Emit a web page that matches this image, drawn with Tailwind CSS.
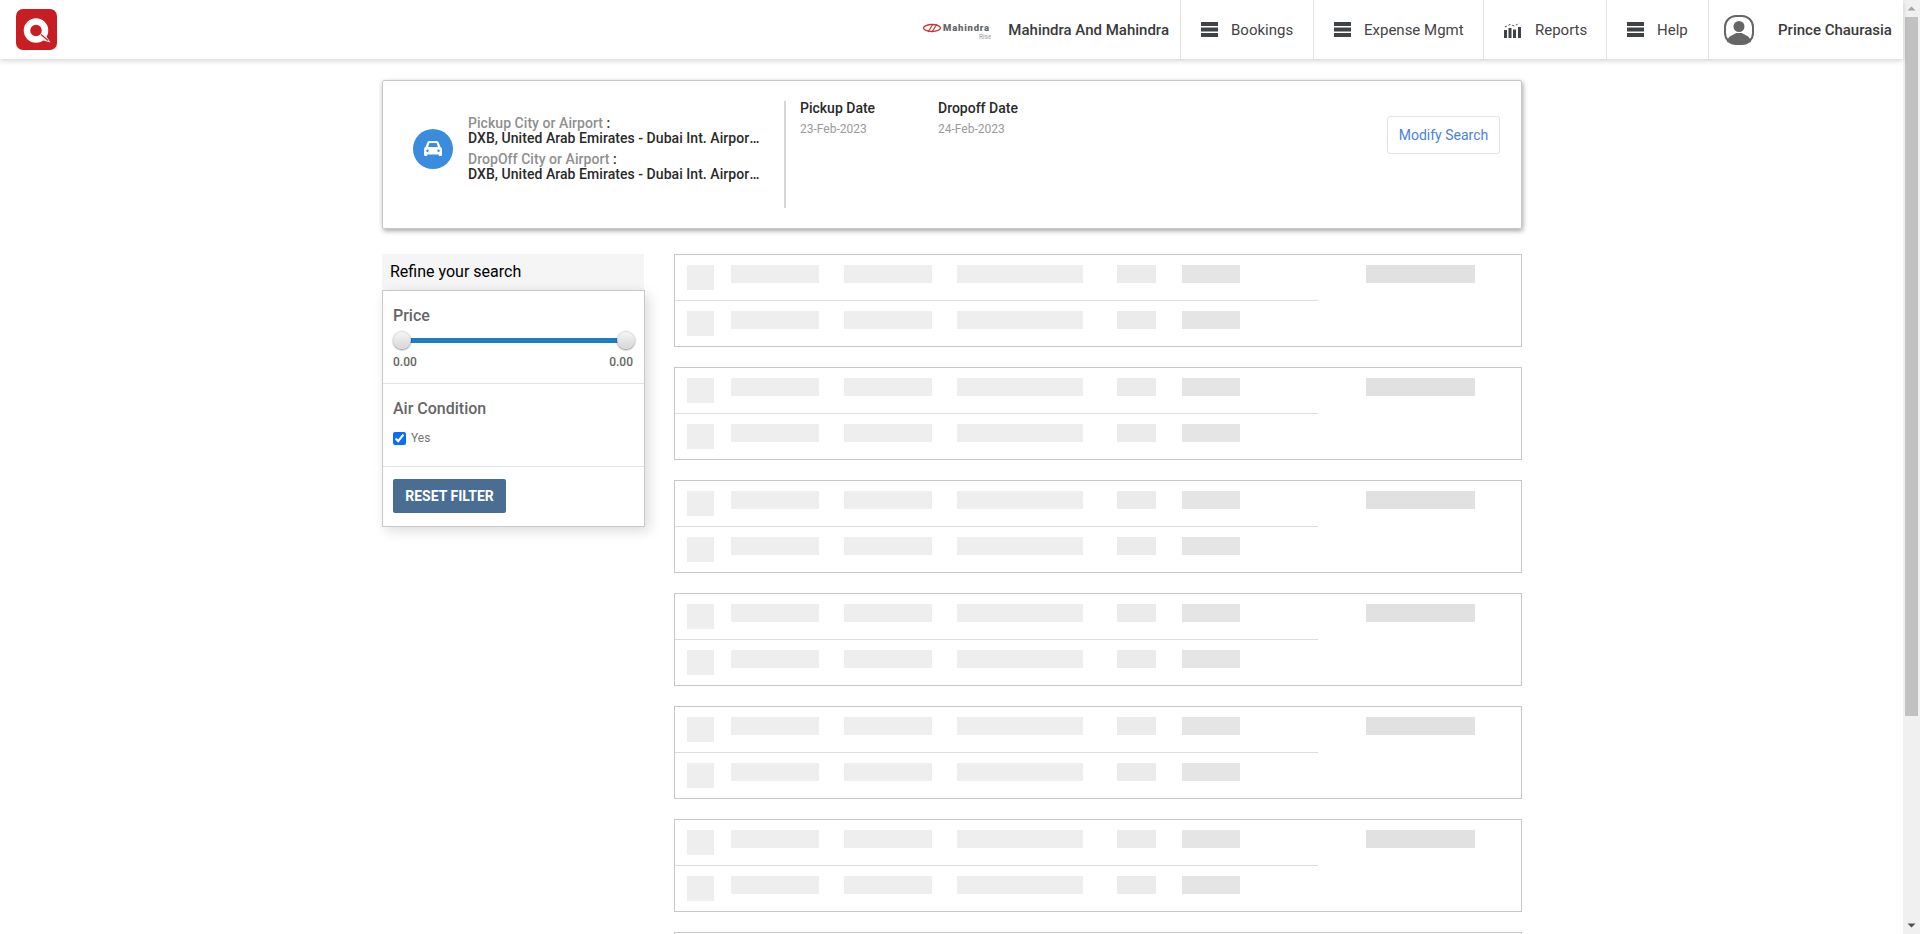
<!DOCTYPE html>
<html>
<head>
    <title>Car Search</title>
    <meta charset="UTF-8">
    <meta name="viewport" content="width=device-width, initial-scale=1">
    <script src="https://cdn.jsdelivr.net/npm/@tailwindcss/browser@4"></script>
</head>
<body class="bg-white font-['Roboto',sans-serif] text-[#333]">
<div class="flex h-[934px] overflow-hidden">
    <div class="flex-1 min-w-0">
        <!-- top nav -->
        <header class="h-[59px] flex items-center bg-white shadow-[0_2px_5px_rgba(0,0,0,0.16)] relative">
            <div class="w-[41px] h-[41px] ml-[16px] mt-[-1px] rounded-[7px] bg-[#c81e23]">
                <svg width="41" height="41" viewBox="0 0 41 41">
                    <circle cx="20" cy="21.500" r="9" fill="none" stroke="#fff" stroke-width="6.500"/>
                    <path d="M22 30 L28 24 L34.500 33.500 Z" fill="#fff"/>
                    <path d="M25 25.500 L32 31.500" stroke="#c81e23" stroke-width="1.200"/>
                </svg>
            </div>
            <div class="ml-auto flex h-full items-center text-[15px]">
                <svg width="68" height="20" viewBox="0 0 68 20" class="mr-[17px]">
                    <ellipse cx="9" cy="8" rx="8.500" ry="3.500" fill="none" stroke="#c8363a" stroke-width="1.300"/>
                    <path d="M5 12 L10 4 M9 12 L14 4" stroke="#c8363a" stroke-width="1.200"/>
                    <text x="20" y="11" font-size="9.500" font-weight="900" letter-spacing="0.800" fill="#666">Mahindra</text>
                    <text x="56" y="19" font-size="6.500" fill="#999">Rise</text>
                </svg>
                <span class="font-medium text-[#3a3a3a] pr-[11px] pt-[1px]">Mahindra And Mahindra</span>
                <a class="h-full flex items-center border-l border-[#e3e3e3] pl-[20px] w-[133px] text-[#444]">
                    <svg width="17" height="15" viewBox="0 0 17 15" class="mr-[13px]" fill="#3f4345"><rect width="17" height="4"/><rect y="5.500" width="17" height="4"/><rect y="11" width="17" height="4"/></svg>
                    <span class="pt-[1px]">Bookings</span>
                </a>
                <a class="h-full flex items-center border-l border-[#e3e3e3] pl-[20px] w-[170px] text-[#444]">
                    <svg width="17" height="15" viewBox="0 0 17 15" class="mr-[13px]" fill="#3f4345"><rect width="17" height="4"/><rect y="5.500" width="17" height="4"/><rect y="11" width="17" height="4"/></svg>
                    <span class="pt-[1px]">Expense Mgmt</span>
                </a>
                <a class="h-full flex items-center border-l border-[#e3e3e3] pl-[20px] w-[123px] text-[#444]">
                    <svg width="17" height="16" viewBox="0 0 17 16" class="mr-[14px]" fill="#3f4345">
                        <rect y="8" width="3" height="8"/><rect x="4.500" y="6" width="3" height="10"/><rect x="9" y="7.500" width="3" height="8.500"/><rect x="14" y="5" width="3" height="11"/>
                        <path d="M1 5 L6 2.500 L10.500 4 L15.500 1" fill="none" stroke="#3f4345" stroke-width="1" stroke-dasharray="2 2"/>
                    </svg>
                    <span class="pt-[1px]">Reports</span>
                </a>
                <a class="h-full flex items-center border-l border-[#e3e3e3] pl-[20px] w-[102px] text-[#444]">
                    <svg width="17" height="15" viewBox="0 0 17 15" class="mr-[13px]" fill="#3f4345"><rect width="17" height="4"/><rect y="5.500" width="17" height="4"/><rect y="11" width="17" height="4"/></svg>
                    <span class="pt-[1px]">Help</span>
                </a>
                <div class="h-full flex items-center border-l border-[#e3e3e3] pl-[15px] w-[195px]">
                    <svg width="30" height="30" viewBox="0 0 30 30" class="mr-[24px]">
                        <rect x="1" y="1" width="28" height="28" rx="11" fill="#fff" stroke="#666" stroke-width="2"/>
                        <circle cx="15" cy="11.500" r="5.500" fill="#666"/>
                        <path d="M3 27 C4 20 10 20 12 18 L18 18 C20 20 26 20 27 27 Q15 31 3 27 Z" fill="#666"/>
                    </svg>
                    <span class="font-medium text-[#3a3a3a] pt-[1px]">Prince Chaurasia</span>
                </div>
            </div>
        </header>

        <!-- search summary -->
        <section class="ml-[382px] mt-[21px] w-[1140px] h-[149px] flex items-start border border-[#c8c8c8] rounded-[2px] shadow-[1px_2px_5px_rgba(0,0,0,0.35)] relative">
            <div class="flex items-center mt-[35px] pl-[30px] w-[401px] shrink-0">
                <div class="w-10 h-10 rounded-full bg-[#3a8cde] flex items-center justify-center shrink-0">
                    <svg width="20" height="16" viewBox="0 0 20 16" fill="#fff">
                        <path d="M4.500 1 Q5 0 6.500 0 L13.500 0 Q15 0 15.500 1 L17.500 6 Q19 6.500 19 8 L19 14 Q19 15 18 15 L16 15 L15.500 13.500 L4.500 13.500 L4 15 L2 15 Q1 15 1 14 L1 8 Q1 6.500 2.500 6 Z M5 6 L15 6 L13.500 2 L6.500 2 Z"/>
                        <circle cx="4.500" cy="9.800" r="1.200" fill="#3a8cde"/><circle cx="15.500" cy="9.800" r="1.200" fill="#3a8cde"/>
                    </svg>
                </div>
                <div class="ml-[15px] w-[293px] text-[14px] leading-[15px] font-medium tracking-[0.05px]">
                    <p class="text-[#8f8f8f]">Pickup City or Airport <span class="text-[#333]">:</span></p>
                    <p class="truncate text-[#2a2a2a]">DXB, United Arab Emirates - Dubai Int. Airport (DXB)</p>
                    <p class="text-[#8f8f8f] mt-[6px]">DropOff City or Airport <span class="text-[#333]">:</span></p>
                    <p class="truncate text-[#2a2a2a]">DXB, United Arab Emirates - Dubai Int. Airport (DXB)</p>
                </div>
            </div>
            <div class="w-[2px] h-[107px] bg-[#d6d6d6] mt-[20px] shrink-0"></div>
            <div class="ml-[14px] mt-[17px] w-[138px]">
                <p class="text-[14px] leading-[20px] font-medium text-[#2a2a2a]">Pickup Date</p>
                <p class="text-[12px] leading-[20px] mt-[1px] text-[#9a9a9a]">23-Feb-2023</p>
            </div>
            <div class="mt-[17px]">
                <p class="text-[14px] leading-[20px] font-medium text-[#2a2a2a]">Dropoff Date</p>
                <p class="text-[12px] leading-[20px] mt-[1px] text-[#9a9a9a]">24-Feb-2023</p>
            </div>
            <button class="ml-auto mr-[21px] mt-[35px] w-[113px] h-[38px] border border-[#dfe3ea] rounded-[3px] text-[14px] text-[#4a82dc]">Modify Search</button>
        </section>

        <div class="ml-[382px] mt-[25px] flex items-start">
            <!-- filters -->
            <aside class="w-[263px]">
                <h3 class="h-[36px] w-[262px] bg-[#f5f5f5] pl-[8px] text-[16px] leading-[36px] text-black">Refine your search</h3>
                <div class="border border-[#c8c8c8] h-[237px] shadow-[4px_4px_12px_rgba(0,0,0,0.14)]">
                    <div class="h-[93px] px-[10px] pt-[15px] border-b border-[#e3e3e3]">
                        <p class="text-[16px] leading-[20px] font-medium text-[#666]">Price</p>
                        <div class="relative h-[20px] mt-[5px]">
                            <div class="absolute left-[8px] right-[8px] top-[7px] h-[5px] bg-[#1e7cc4]"></div>
                            <span class="absolute left-0 top-0 w-[18px] h-[18px] rounded-full border border-[#ddd] bg-[linear-gradient(#f6f6f6,#d8d8d8)] shadow-[0_1px_2px_rgba(0,0,0,0.5)]"></span>
                            <span class="absolute right-[-1px] top-0 w-[18px] h-[18px] rounded-full border border-[#ddd] bg-[linear-gradient(#f6f6f6,#d8d8d8)] shadow-[0_1px_2px_rgba(0,0,0,0.5)]"></span>
                        </div>
                        <div class="flex justify-between text-[12px] leading-[14px] mt-[4px] pr-[1px] font-medium text-[#666]"><span>0.00</span><span>0.00</span></div>
                    </div>
                    <div class="h-[83px] px-[10px] pt-[15px] border-b border-[#e3e3e3]">
                        <p class="text-[16px] leading-[20px] font-medium text-[#666]">Air Condition</p>
                        <label class="flex items-start mt-[11px] text-[12px] leading-[14px] text-[#777]">
                            <input type="checkbox" checked class="w-[13px] h-[13px] mt-[2px] mr-[5px] accent-[#0b6cf5]"><span class="mt-[1px]">Yes</span>
                        </label>
                    </div>
                    <div class="px-[10px] pt-[12px]">
                        <button class="w-[113px] h-[34px] rounded-[2px] bg-[#4a6d94] text-white text-[14px] font-bold">RESET FILTER</button>
                    </div>
                </div>
            </aside>

            <!-- skeleton results -->
            <div class="ml-[29px] w-[848px] flex flex-col gap-[20px]">
                <div class="relative h-[93px] border border-[#c8c8c8] shrink-0">
                    <div class="h-[46px] w-[643px] border-b border-[#dcdce2] flex items-start pt-[10px] pl-[12px]">
                        <i class="block w-[27px] h-[25px] bg-[#eeeeee]"></i><i class="block ml-[17px] w-[88px] h-[18px] bg-[#eeeeee]"></i><i class="block ml-[25px] w-[88px] h-[18px] bg-[#eeeeee]"></i><i class="block ml-[25px] w-[126px] h-[18px] bg-[#eeeeee]"></i><i class="block ml-[34px] w-[39px] h-[18px] bg-[#ebebeb]"></i><i class="block ml-[26px] w-[58px] h-[18px] bg-[#e5e5e5]"></i>
                    </div>
                    <div class="flex items-start pt-[10px] pl-[12px]">
                        <i class="block w-[27px] h-[25px] bg-[#eeeeee]"></i><i class="block ml-[17px] w-[88px] h-[18px] bg-[#eeeeee]"></i><i class="block ml-[25px] w-[88px] h-[18px] bg-[#eeeeee]"></i><i class="block ml-[25px] w-[126px] h-[18px] bg-[#eeeeee]"></i><i class="block ml-[34px] w-[39px] h-[18px] bg-[#ebebeb]"></i><i class="block ml-[26px] w-[58px] h-[18px] bg-[#e5e5e5]"></i>
                    </div>
                    <i class="absolute left-[691px] top-[10px] block w-[109px] h-[18px] bg-[#e1e1e1]"></i>
                </div>
                <div class="relative h-[93px] border border-[#c8c8c8] shrink-0">
                    <div class="h-[46px] w-[643px] border-b border-[#dcdce2] flex items-start pt-[10px] pl-[12px]">
                        <i class="block w-[27px] h-[25px] bg-[#eeeeee]"></i><i class="block ml-[17px] w-[88px] h-[18px] bg-[#eeeeee]"></i><i class="block ml-[25px] w-[88px] h-[18px] bg-[#eeeeee]"></i><i class="block ml-[25px] w-[126px] h-[18px] bg-[#eeeeee]"></i><i class="block ml-[34px] w-[39px] h-[18px] bg-[#ebebeb]"></i><i class="block ml-[26px] w-[58px] h-[18px] bg-[#e5e5e5]"></i>
                    </div>
                    <div class="flex items-start pt-[10px] pl-[12px]">
                        <i class="block w-[27px] h-[25px] bg-[#eeeeee]"></i><i class="block ml-[17px] w-[88px] h-[18px] bg-[#eeeeee]"></i><i class="block ml-[25px] w-[88px] h-[18px] bg-[#eeeeee]"></i><i class="block ml-[25px] w-[126px] h-[18px] bg-[#eeeeee]"></i><i class="block ml-[34px] w-[39px] h-[18px] bg-[#ebebeb]"></i><i class="block ml-[26px] w-[58px] h-[18px] bg-[#e5e5e5]"></i>
                    </div>
                    <i class="absolute left-[691px] top-[10px] block w-[109px] h-[18px] bg-[#e1e1e1]"></i>
                </div>
                <div class="relative h-[93px] border border-[#c8c8c8] shrink-0">
                    <div class="h-[46px] w-[643px] border-b border-[#dcdce2] flex items-start pt-[10px] pl-[12px]">
                        <i class="block w-[27px] h-[25px] bg-[#eeeeee]"></i><i class="block ml-[17px] w-[88px] h-[18px] bg-[#eeeeee]"></i><i class="block ml-[25px] w-[88px] h-[18px] bg-[#eeeeee]"></i><i class="block ml-[25px] w-[126px] h-[18px] bg-[#eeeeee]"></i><i class="block ml-[34px] w-[39px] h-[18px] bg-[#ebebeb]"></i><i class="block ml-[26px] w-[58px] h-[18px] bg-[#e5e5e5]"></i>
                    </div>
                    <div class="flex items-start pt-[10px] pl-[12px]">
                        <i class="block w-[27px] h-[25px] bg-[#eeeeee]"></i><i class="block ml-[17px] w-[88px] h-[18px] bg-[#eeeeee]"></i><i class="block ml-[25px] w-[88px] h-[18px] bg-[#eeeeee]"></i><i class="block ml-[25px] w-[126px] h-[18px] bg-[#eeeeee]"></i><i class="block ml-[34px] w-[39px] h-[18px] bg-[#ebebeb]"></i><i class="block ml-[26px] w-[58px] h-[18px] bg-[#e5e5e5]"></i>
                    </div>
                    <i class="absolute left-[691px] top-[10px] block w-[109px] h-[18px] bg-[#e1e1e1]"></i>
                </div>
                <div class="relative h-[93px] border border-[#c8c8c8] shrink-0">
                    <div class="h-[46px] w-[643px] border-b border-[#dcdce2] flex items-start pt-[10px] pl-[12px]">
                        <i class="block w-[27px] h-[25px] bg-[#eeeeee]"></i><i class="block ml-[17px] w-[88px] h-[18px] bg-[#eeeeee]"></i><i class="block ml-[25px] w-[88px] h-[18px] bg-[#eeeeee]"></i><i class="block ml-[25px] w-[126px] h-[18px] bg-[#eeeeee]"></i><i class="block ml-[34px] w-[39px] h-[18px] bg-[#ebebeb]"></i><i class="block ml-[26px] w-[58px] h-[18px] bg-[#e5e5e5]"></i>
                    </div>
                    <div class="flex items-start pt-[10px] pl-[12px]">
                        <i class="block w-[27px] h-[25px] bg-[#eeeeee]"></i><i class="block ml-[17px] w-[88px] h-[18px] bg-[#eeeeee]"></i><i class="block ml-[25px] w-[88px] h-[18px] bg-[#eeeeee]"></i><i class="block ml-[25px] w-[126px] h-[18px] bg-[#eeeeee]"></i><i class="block ml-[34px] w-[39px] h-[18px] bg-[#ebebeb]"></i><i class="block ml-[26px] w-[58px] h-[18px] bg-[#e5e5e5]"></i>
                    </div>
                    <i class="absolute left-[691px] top-[10px] block w-[109px] h-[18px] bg-[#e1e1e1]"></i>
                </div>
                <div class="relative h-[93px] border border-[#c8c8c8] shrink-0">
                    <div class="h-[46px] w-[643px] border-b border-[#dcdce2] flex items-start pt-[10px] pl-[12px]">
                        <i class="block w-[27px] h-[25px] bg-[#eeeeee]"></i><i class="block ml-[17px] w-[88px] h-[18px] bg-[#eeeeee]"></i><i class="block ml-[25px] w-[88px] h-[18px] bg-[#eeeeee]"></i><i class="block ml-[25px] w-[126px] h-[18px] bg-[#eeeeee]"></i><i class="block ml-[34px] w-[39px] h-[18px] bg-[#ebebeb]"></i><i class="block ml-[26px] w-[58px] h-[18px] bg-[#e5e5e5]"></i>
                    </div>
                    <div class="flex items-start pt-[10px] pl-[12px]">
                        <i class="block w-[27px] h-[25px] bg-[#eeeeee]"></i><i class="block ml-[17px] w-[88px] h-[18px] bg-[#eeeeee]"></i><i class="block ml-[25px] w-[88px] h-[18px] bg-[#eeeeee]"></i><i class="block ml-[25px] w-[126px] h-[18px] bg-[#eeeeee]"></i><i class="block ml-[34px] w-[39px] h-[18px] bg-[#ebebeb]"></i><i class="block ml-[26px] w-[58px] h-[18px] bg-[#e5e5e5]"></i>
                    </div>
                    <i class="absolute left-[691px] top-[10px] block w-[109px] h-[18px] bg-[#e1e1e1]"></i>
                </div>
                <div class="relative h-[93px] border border-[#c8c8c8] shrink-0">
                    <div class="h-[46px] w-[643px] border-b border-[#dcdce2] flex items-start pt-[10px] pl-[12px]">
                        <i class="block w-[27px] h-[25px] bg-[#eeeeee]"></i><i class="block ml-[17px] w-[88px] h-[18px] bg-[#eeeeee]"></i><i class="block ml-[25px] w-[88px] h-[18px] bg-[#eeeeee]"></i><i class="block ml-[25px] w-[126px] h-[18px] bg-[#eeeeee]"></i><i class="block ml-[34px] w-[39px] h-[18px] bg-[#ebebeb]"></i><i class="block ml-[26px] w-[58px] h-[18px] bg-[#e5e5e5]"></i>
                    </div>
                    <div class="flex items-start pt-[10px] pl-[12px]">
                        <i class="block w-[27px] h-[25px] bg-[#eeeeee]"></i><i class="block ml-[17px] w-[88px] h-[18px] bg-[#eeeeee]"></i><i class="block ml-[25px] w-[88px] h-[18px] bg-[#eeeeee]"></i><i class="block ml-[25px] w-[126px] h-[18px] bg-[#eeeeee]"></i><i class="block ml-[34px] w-[39px] h-[18px] bg-[#ebebeb]"></i><i class="block ml-[26px] w-[58px] h-[18px] bg-[#e5e5e5]"></i>
                    </div>
                    <i class="absolute left-[691px] top-[10px] block w-[109px] h-[18px] bg-[#e1e1e1]"></i>
                </div>
                <div class="relative h-[93px] border border-[#c8c8c8] shrink-0"></div>
            </div>
        </div>
    </div>

    <!-- scrollbar -->
    <div class="w-[17px] h-full bg-[#f0f0f0] flex flex-col items-center shrink-0">
        <svg width="17" height="17" viewBox="0 0 17 17" class="shrink-0"><path d="M4.500 10.500 L8.500 6.500 L12.500 10.500 Z" fill="#a3a3a3"/></svg>
        <div class="w-[13px] h-[699px] bg-[#c1c1c1] shrink-0"></div>
        <svg width="17" height="17" viewBox="0 0 17 17" class="shrink-0 mt-auto"><path d="M4.500 6.500 L8.500 10.500 L12.500 6.500 Z" fill="#505050"/></svg>
    </div>
</div>
</body>
</html>
